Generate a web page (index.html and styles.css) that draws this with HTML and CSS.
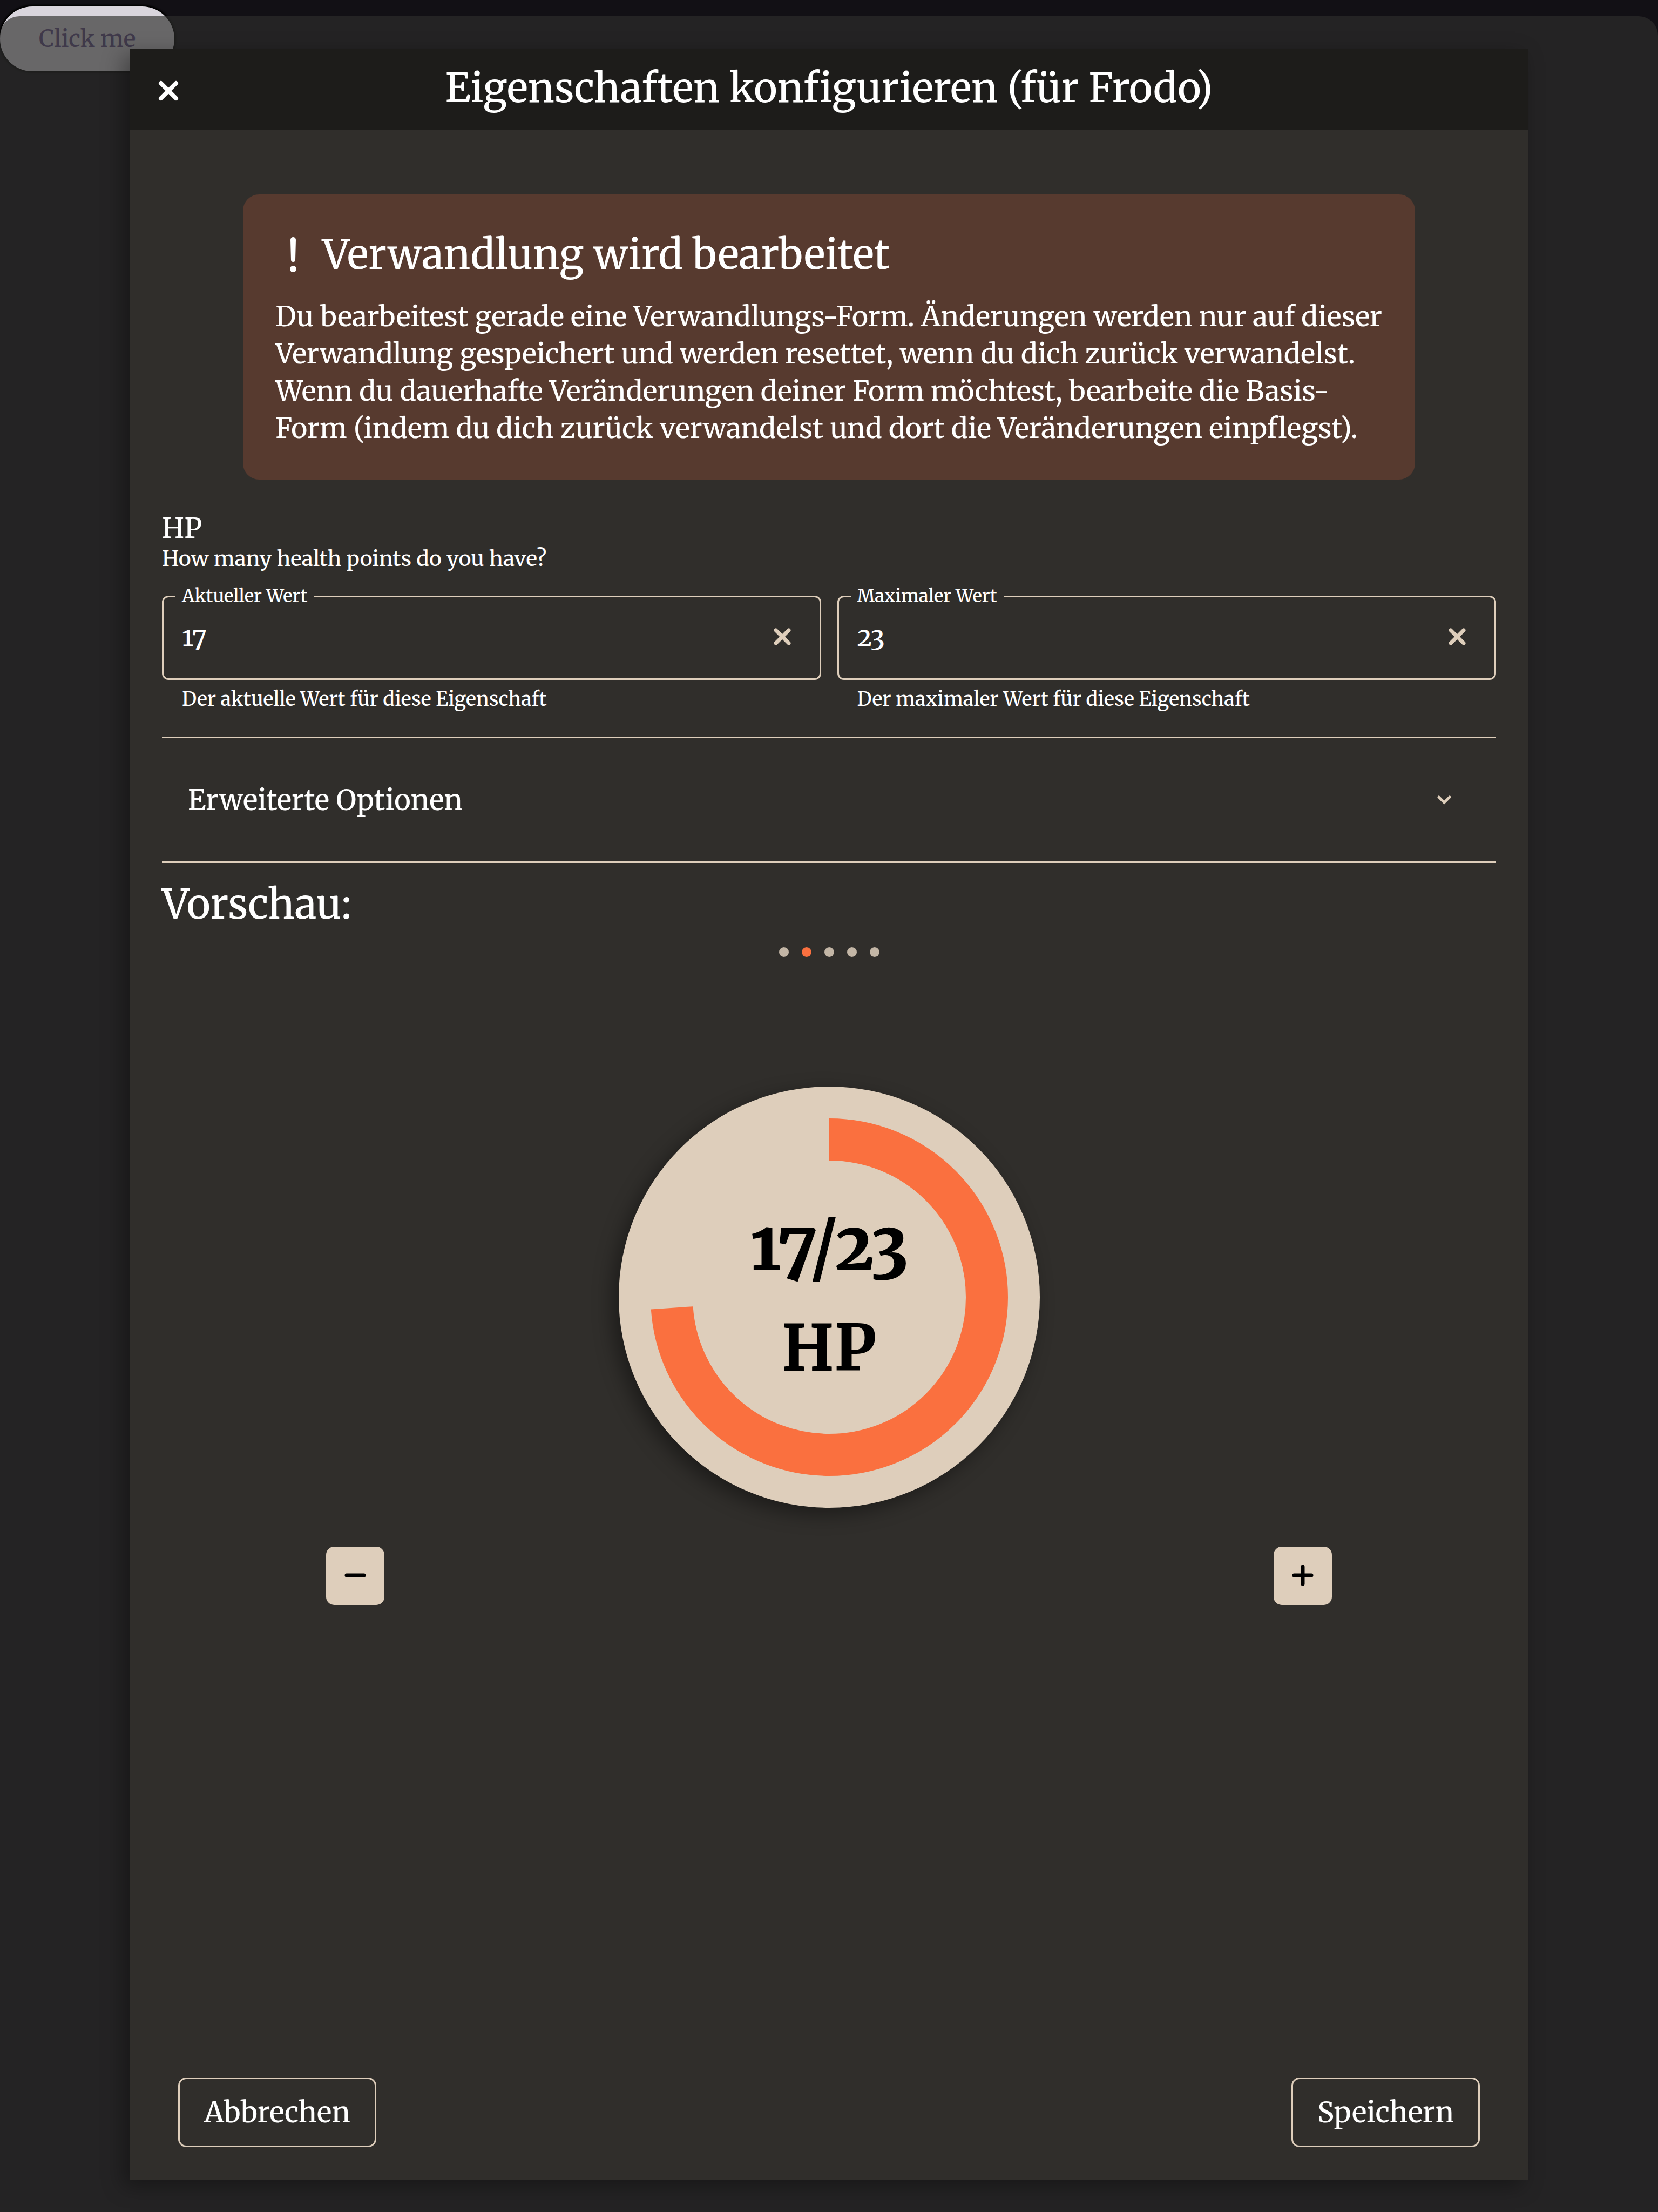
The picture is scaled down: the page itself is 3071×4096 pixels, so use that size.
FILE: index.html
```html
<!DOCTYPE html>
<html lang="de">
<head>
<meta charset="utf-8">
<meta name="viewport" content="width=device-width, initial-scale=1">
<title>Eigenschaften konfigurieren</title>
<link rel="stylesheet" href="styles.css">
</head>
<body>
<button class="click-me" type="button">Click me</button>
<div class="scrim">
  <section class="dialog" role="dialog" aria-labelledby="dialog-title">
    <header class="dialog-header">
      <button class="icon-button close" type="button" aria-label="Schließen">
        <svg viewBox="0 0 38 38" width="38" height="38" fill="none" stroke="currentColor" stroke-width="8" stroke-linecap="round"><path d="M5 5L33 33M33 5L5 33"/></svg>
      </button>
      <h1 class="dialog-title" id="dialog-title">Eigenschaften konfigurieren (für Frodo)</h1>
    </header>
    <div class="dialog-body">
      <div class="alert" role="note">
        <h2 class="headline alert-title">
          <svg viewBox="0 0 66 66" width="66" height="66" fill="currentColor"><path d="M28 6a5 5 0 0 1 10 0L37 43a4 4 0 0 1-8 0Z"/><circle cx="33" cy="60" r="6"/></svg>
          Verwandlung wird bearbeitet
        </h2>
        <p class="alert-text">Du bearbeitest gerade eine Verwandlungs-Form. Änderungen werden nur auf dieser Verwandlung gespeichert und werden resettet, wenn du dich zurück verwandelst. Wenn du dauerhafte Veränderungen deiner Form möchtest, bearbeite die Basis-Form (indem du dich zurück verwandelst und dort die Veränderungen einpflegst).</p>
      </div>
      <h2 class="stat-name">HP</h2>
      <p class="stat-hint">How many health points do you have?</p>
      <div class="fields">
        <div>
          <fieldset class="field">
            <legend><label for="current">Aktueller Wert</label></legend>
            <div class="field-row">
              <input id="current" type="text" inputmode="numeric" value="17" aria-describedby="current-help">
              <button class="icon-button clear" type="button" aria-label="Aktuellen Wert löschen">
                <svg viewBox="0 0 32 32" width="32" height="32" fill="none" stroke="currentColor" stroke-width="7" stroke-linecap="round"><path d="M4 4L28 28M28 4L4 28"/></svg>
              </button>
            </div>
          </fieldset>
          <p class="helper" id="current-help">Der aktuelle Wert für diese Eigenschaft</p>
        </div>
        <div>
          <fieldset class="field">
            <legend><label for="maximum">Maximaler Wert</label></legend>
            <div class="field-row">
              <input id="maximum" type="text" inputmode="numeric" value="23" aria-describedby="maximum-help">
              <button class="icon-button clear" type="button" aria-label="Maximalen Wert löschen">
                <svg viewBox="0 0 32 32" width="32" height="32" fill="none" stroke="currentColor" stroke-width="7" stroke-linecap="round"><path d="M4 4L28 28M28 4L4 28"/></svg>
              </button>
            </div>
          </fieldset>
          <p class="helper" id="maximum-help">Der maximaler Wert für diese Eigenschaft</p>
        </div>
      </div>
      <button class="accordion" type="button" aria-expanded="false">
        <span>Erweiterte Optionen</span>
        <svg viewBox="0 0 26 18" width="26" height="18" fill="none" stroke="#decebb" stroke-width="5" stroke-linecap="round"><path d="M3 4L13 14L23 4"/></svg>
      </button>
      <h2 class="headline preview-title">Vorschau:</h2>
      <div class="dots"><i></i><i class="active"></i><i></i><i></i><i></i></div>
      <div class="gauge">
        <svg viewBox="0 0 780 780"><circle cx="390" cy="390" r="292" fill="none" stroke="#fa703f" stroke-width="78" pathLength="23" stroke-dasharray="17 23" transform="rotate(-90 390 390)"/></svg>
        <p class="gauge-text"><span class="gauge-value">17/23</span><span>HP</span></p>
      </div>
      <div class="stepper">
        <button class="step" type="button" aria-label="Verringern">
          <svg viewBox="0 0 40 40" width="40" height="40" fill="none" stroke="currentColor" stroke-width="7" stroke-linecap="round"><path d="M4 19H36"/></svg>
        </button>
        <button class="step" type="button" aria-label="Erhöhen">
          <svg viewBox="0 0 40 40" width="40" height="40" fill="none" stroke="currentColor" stroke-width="7" stroke-linecap="round"><path d="M4 19H36M20 3V35"/></svg>
        </button>
      </div>
      <footer class="actions">
        <button class="action" type="button">Abbrechen</button>
        <button class="action" type="button">Speichern</button>
      </footer>
    </div>
  </section>
</div>
</body>
</html>
```
FILE: styles.css
```css
* {
  box-sizing: border-box;
}

body {
  margin: 0;
  min-height: 100vh;
  position: relative;
  background: #121015;
  color: #fff;
  font-family: Merriweather, "DejaVu Serif Condensed", "DejaVu Serif", serif;
  font-size: 51px;
  font-weight: 500;
  font-variant-numeric: oldstyle-nums;
}

h1, h2, p {
  margin: 0;
  font-weight: 500;
}

button {
  margin: 0;
  padding: 0;
  border: 0;
  background: none;
  color: inherit;
  font: inherit;
}

svg {
  display: block;
}

.click-me {
  display: block;
  margin-top: 12px;
  padding: 0 72px;
  height: 120px;
  border-radius: 60px;
  background: #d9d5dd;
  box-shadow: 0 0 3px 3px #000;
  color: #614f84;
  font-size: 43px;
}

/* Dimmed sheet above the page, holding the dialog */
.scrim {
  position: absolute;
  inset: 30px 0 0;
  display: flex;
  padding: 60px 240px;
  border-radius: 36px 36px 0 0;
  background: rgba(45, 45, 44, 0.66);
}

.dialog {
  flex: 1;
  display: flex;
  flex-direction: column;
  background: #302e2b;
  box-shadow: -12px 12px 36px rgba(0, 0, 0, 0.35);
}

.dialog-header {
  display: grid;
  grid-template-columns: 144px 1fr 144px;
  height: 150px;
  background: #1d1c1a;
}

.dialog-title {
  font-size: 74px;
  line-height: 146px;
  text-align: center;
}

.icon-button {
  display: grid;
  place-items: center;
}

.close {
  padding-top: 6px;
}

.dialog-body {
  flex: 1;
  display: flex;
  flex-direction: column;
  padding: 120px 60px 60px;
}

.headline {
  font-size: 75px;
  line-height: 102px;
}

.alert {
  margin: 0 150px;
  padding: 60px 48px 60px 60px;
  border-radius: 30px;
  background: #573a2f;
}

.alert-title {
  display: flex;
  align-items: center;
  gap: 21px;
}

.alert-text {
  margin-top: 30px;
  line-height: 69px;
}

.stat-name {
  margin-top: 60px;
  font-size: 51px;
  line-height: 60px;
}

.stat-hint {
  font-size: 39px;
  line-height: 54px;
}

.fields {
  display: grid;
  grid-template-columns: 1fr 1fr;
  gap: 30px;
  margin-top: 24px;
}

.field {
  margin: 0;
  min-width: 0;
  padding: 0 33px 20px 22px;
  border: 3px solid #decebb;
  border-radius: 12px;
}

.field legend {
  padding: 0 12px;
  font-size: 33px;
  line-height: 36px;
}

.field-row {
  display: flex;
  align-items: center;
  height: 114px;
  padding-left: 12px;
}

.field input {
  flex: 1;
  min-width: 0;
  height: 72px;
  padding: 0;
  border: 0;
  outline: 0;
  background: none;
  color: inherit;
  font: inherit;
  font-size: 48px;
  font-variant-numeric: oldstyle-nums;
}

.clear {
  width: 72px;
  height: 72px;
  color: #decebb;
}

.helper {
  margin-top: 12px;
  padding-left: 37px;
  font-size: 36px;
  line-height: 48px;
}

.accordion {
  display: flex;
  align-items: center;
  justify-content: space-between;
  height: 234px;
  margin-top: 45px;
  padding: 0 83px 0 48px;
  border: solid #decebb;
  border-width: 3px 0;
  font-size: 52px;
}

.preview-title {
  margin-top: 25px;
}

.dots {
  display: flex;
  justify-content: center;
  gap: 24px;
  margin-top: 29px;
}

.dots i {
  width: 18px;
  height: 18px;
  border-radius: 50%;
  background: #c3b6a6;
}

.dots .active {
  background: #fa703f;
}

.gauge {
  display: grid;
  align-self: center;
  width: 780px;
  margin-top: 240px;
  border-radius: 50%;
  background: #decebb;
  box-shadow: -12px 12px 36px rgba(0, 0, 0, 0.4);
}

.gauge > * {
  grid-area: 1 / 1;
}

.gauge-text {
  align-self: center;
  color: #000;
  font-size: 117px;
  font-weight: 800;
  line-height: 189px;
  text-align: center;
}

.gauge-text span {
  display: block;
}

.gauge-value {
  font-size: 124px;
}

.stepper {
  display: flex;
  justify-content: space-between;
  margin-top: 72px;
  padding: 0 304px;
}

.step {
  display: grid;
  place-items: center;
  width: 108px;
  height: 108px;
  border-radius: 15px;
  background: #decebb;
  color: #000;
}

.actions {
  display: flex;
  justify-content: space-between;
  margin-top: auto;
  padding: 0 30px;
}

.action {
  height: 129px;
  padding: 0 45px;
  border: 3px solid #decebb;
  border-radius: 15px;
  font-size: 52px;
}
```
